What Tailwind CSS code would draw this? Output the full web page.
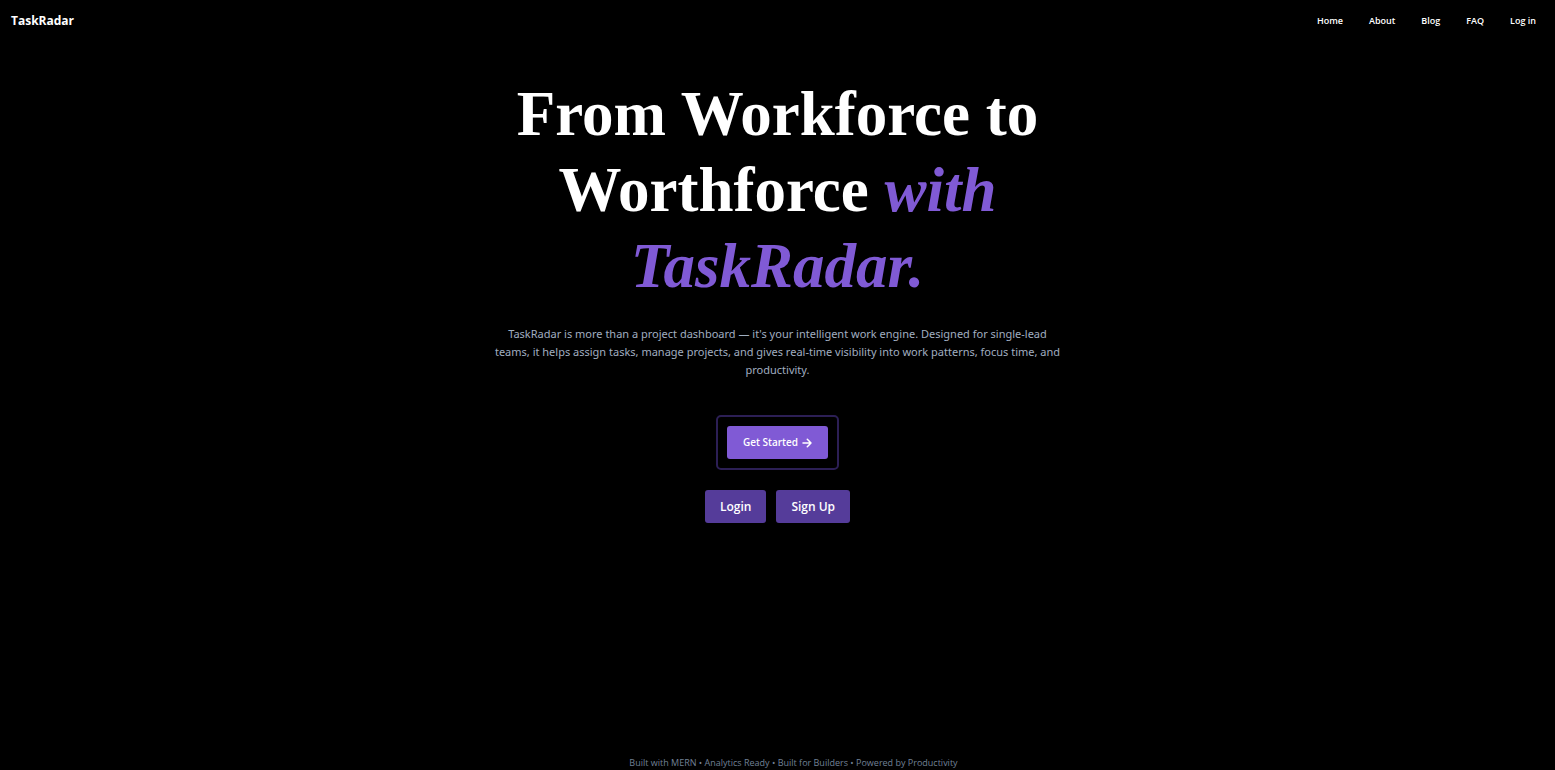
<!DOCTYPE html>
<html lang="en">
<head>
<meta charset="utf-8">
<meta name="viewport" content="width=device-width, initial-scale=1">
<title>TaskRadar</title>
<script src="https://cdn.jsdelivr.net/npm/@tailwindcss/browser@4"></script>
</head>
<body class="flex min-h-screen flex-col bg-black font-['Segoe_UI','Open_Sans',sans-serif] text-white">
  <header class="flex h-[41px] items-center justify-between pl-[11px] pr-[19px]">
    <a href="#" class="text-[12px] font-bold">TaskRadar</a>
    <nav class="flex gap-[26px] text-[9px] font-semibold">
      <a href="#">Home</a>
      <a href="#">About</a>
      <a href="#">Blog</a>
      <a href="#">FAQ</a>
      <a href="#">Log in</a>
    </nav>
  </header>
  <main class="mx-auto flex w-full max-w-[590px] grow flex-col items-center pt-[35px] text-center">
    <h1 class="font-['Liberation_Serif',serif] text-[63px] leading-[76px] font-bold"><span class="block">From Workforce to</span> <span>Worthforce</span> <em class="text-[#805ad5]">with</em> <em class="text-[#805ad5]">TaskRadar.</em></h1>
    <p class="mt-[21px] max-w-[576px] font-['Noto_Sans',sans-serif] text-[11px] leading-[18px] text-[#a0aec0]">TaskRadar is more than a project dashboard — it's your intelligent work engine. Designed for single-lead teams, it helps assign tasks, manage projects, and gives real-time visibility into work patterns, focus time, and productivity.</p>
    <div class="mt-9 rounded-[5px] border-2 border-[#2c1f55] p-[9px]">
      <button type="button" class="flex h-[33px] items-center gap-1 rounded-[3px] bg-[#805ad5] px-4 text-[10px] font-semibold">Get Started
        <svg class="size-[10px]" viewBox="0 0 10 10" fill="none" stroke="currentColor" stroke-width="1.5" stroke-linecap="round" stroke-linejoin="round" aria-hidden="true"><path d="M1 5h8M5.3 1.2 9 5 5.3 8.8"/></svg>
      </button>
    </div>
    <div class="mt-5 flex gap-[10px] text-[12px] font-semibold">
      <button type="button" class="h-[33px] rounded-[3px] bg-[#553c9a] px-[15px]">Login</button>
      <button type="button" class="h-[33px] rounded-[3px] bg-[#553c9a] px-[15px]">Sign Up</button>
    </div>
  </main>
  <footer class="pl-8 text-center text-[9px] leading-[15px] text-[#718096]">Built with MERN • Analytics Ready • Built for Builders • Powered by Productivity</footer>
</body>
</html>
